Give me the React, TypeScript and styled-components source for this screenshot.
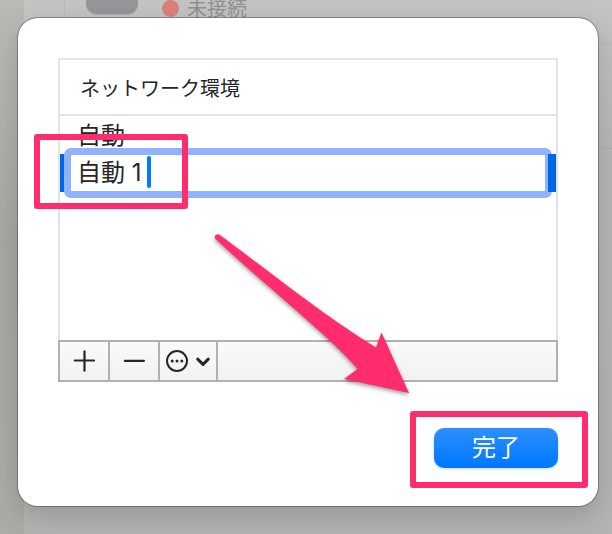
import React, { useState } from "react";
import styled, { createGlobalStyle } from "styled-components";

const PINK = "#ff2d6e";

const GlobalStyle = createGlobalStyle`
  * { box-sizing: border-box; }
  body {
    margin: 0;
    color: #262626;
    font-family: "Noto Sans CJK JP", "Noto Sans", sans-serif;
    background: #b1b0ac;
  }
  button, input { font: inherit; color: inherit; }
`;

const Page = styled.div`
  position: relative;
  min-height: 100vh;
  padding: 18px 14px 28px 18px;
`;

const Backdrop = styled.div`
  position: absolute;
  inset: 0;
  display: flex;
  overflow: hidden;
`;

const Desktop = styled.div`
  flex: 0 0 24px;
  background: linear-gradient(#bab9b5, #a9a7a3 45%, #adaba7);
`;

const Sidebar = styled.div`
  flex: 0 0 40px;
  background: linear-gradient(#c3c3c1, #b4b4b2);
`;

const Content = styled.div`
  flex: 1;
  background: linear-gradient(#c3c3c1, #b6b6b4 30%, #b4b4b2);
`;

const Service = styled.div`
  display: flex;
  align-items: flex-start;
  height: 44px;
  padding-left: 21px;
  border-left: 1px solid #b8b8b6;
  border-bottom: 1px solid #b8b8b6;
`;

const ServiceIcon = styled.span`
  width: 52px;
  height: 14px;
  margin-right: 24px;
  border-radius: 0 0 11px 11px;
  background: #949499;
  box-shadow: 0 1px 1px #a8a8a8;
`;

const StatusDot = styled.span`
  width: 17px;
  height: 17px;
  margin-right: 8px;
  border-radius: 50%;
  background: #d88078;
`;

const Status = styled.span`
  font-size: 20px;
  line-height: 16px;
  color: #90908f;
`;

const Separator = styled.div`
  height: 105px;
  border-bottom: 1px solid #adadab;
`;

const Dialog = styled.main`
  position: relative;
  padding: 40px 40px 38px;
  border-radius: 20px;
  background: #fff;
  box-shadow: 0 0 0 1px rgba(70, 70, 70, 0.5), 0 12px 28px rgba(0, 0, 0, 0.16);
`;

const Panel = styled.section`
  position: relative;
`;

const ListBox = styled.div`
  min-height: 282px;
  border: 2px solid #e3e3e3;
  border-bottom: 0;
`;

const ListHeader = styled.h1`
  margin: 0;
  padding: 2px 20px 0;
  border-bottom: 2px solid #e3e3e3;
  font-size: 20px;
  font-weight: 400;
  line-height: 52px;
`;

const List = styled.ul`
  margin: 0;
  padding: 0;
  list-style: none;
`;

const Row = styled.li<{ $selected?: boolean }>`
  position: relative;
  height: 38px;
  padding: ${(p) => (p.$selected ? "0 4px" : "0 17px")};
  background: ${(p) => (p.$selected ? "#0066e6" : "transparent")};
  font-size: 24px;
  line-height: 36px;
`;

const SelectionCap = styled.span`
  position: absolute;
  top: 0;
  right: 0;
  width: 8px;
  height: 100%;
  background: #0066e6;
`;

const Editor = styled.label`
  position: relative;
  top: -6px;
  display: block;
  border: 7px solid #8fb3ff;
  border-radius: 7px;
  background: #fff;
`;

const NameInput = styled.input`
  display: block;
  width: 100%;
  height: 36px;
  padding: 0 6px;
  border: 0;
  outline: 0;
  background: transparent;
  font-family: "Inter", "Noto Sans CJK JP", sans-serif;
  caret-color: transparent;
`;

const Caret = styled.span`
  position: absolute;
  top: 1px;
  left: 76px;
  width: 4px;
  height: 32px;
  border-radius: 2px;
  background: #007aff;
`;

const Highlight = styled.span<{ $area: "name" | "done" }>`
  position: absolute;
  border: 6px solid ${PINK};
  border-radius: 3px;
  pointer-events: none;
  ${(p) =>
    p.$area === "name"
      ? "top: -20px; left: -26px; width: 154px; height: 75px;"
      : "inset: -17px -30px -20px -24px;"}
`;

const Toolbar = styled.div`
  display: flex;
  height: 42px;
  border: 2px solid #b1b1b1;
  background: linear-gradient(#fafafa, #f2f2f2);
`;

const ToolButton = styled.button<{ $wide?: boolean }>`
  display: flex;
  align-items: center;
  justify-content: center;
  width: ${(p) => (p.$wide ? "58px" : "50px")};
  padding: 0;
  border: 0;
  border-right: 2px solid #b1b1b1;
  background: transparent;
`;

const Arrow = styled.svg`
  position: absolute;
  right: 144px;
  bottom: -18px;
  width: 204px;
  height: 170px;
  pointer-events: none;
  filter: drop-shadow(0 2px 2px rgba(0, 0, 0, 0.4));
`;

const Footer = styled.footer`
  display: flex;
  justify-content: flex-end;
  margin-top: 46px;
`;

const DoneArea = styled.div`
  position: relative;
`;

const DoneButton = styled.button`
  display: block;
  width: 124px;
  height: 40px;
  padding: 0 0 4px;
  border: 0;
  border-radius: 10px;
  background: linear-gradient(#2b8fff, #0077ff);
  box-shadow: 0 1px 3px rgba(0, 110, 255, 0.25);
  color: #fff;
  font-size: 24px;
  line-height: 36px;
`;

const PlusIcon = () => (
  <svg width="22" height="22" viewBox="0 0 22 22" fill="none" stroke="#262626" strokeWidth="2.2" strokeLinecap="round" aria-hidden="true">
    <path d="M11.5 1.3V20.7M1.8 10.5H21" />
  </svg>
);

const MinusIcon = () => (
  <svg width="22" height="22" viewBox="0 0 22 22" fill="none" stroke="#262626" strokeWidth="2.2" strokeLinecap="round" aria-hidden="true">
    <path d="M1.8 10.8H20.9" />
  </svg>
);

const MoreIcon = () => (
  <svg width="46" height="24" viewBox="0 0 46 24" fill="none" stroke="#262626" aria-hidden="true">
    <circle cx="12" cy="12" r="10" strokeWidth="2" />
    <g fill="#262626" stroke="none">
      <circle cx="7.2" cy="12" r="1.5" />
      <circle cx="12" cy="12" r="1.5" />
      <circle cx="16.8" cy="12" r="1.5" />
    </g>
    <path d="M32.7 10.2L38 15.3L43.3 10.2" strokeWidth="3" strokeLinecap="round" strokeLinejoin="round" />
  </svg>
);

export default function App() {
  const [name, setName] = useState("自動 1");

  return (
    <>
      <GlobalStyle />
      <Page>
        <Backdrop>
          <Desktop />
          <Sidebar />
          <Content>
            <Service>
              <ServiceIcon />
              <StatusDot />
              <Status>未接続</Status>
            </Service>
            <Separator />
          </Content>
        </Backdrop>
        <Dialog>
          <Panel>
            <ListBox>
              <ListHeader>ネットワーク環境</ListHeader>
              <List>
                <Row>自動</Row>
                <Row $selected>
                  <Editor>
                    <NameInput
                      aria-label="ネットワーク環境"
                      value={name}
                      onChange={(e) => setName(e.target.value)}
                    />
                    <Caret />
                  </Editor>
                  <SelectionCap />
                  <Highlight $area="name" />
                </Row>
              </List>
            </ListBox>
            <Toolbar>
              <ToolButton type="button" aria-label="追加"><PlusIcon /></ToolButton>
              <ToolButton type="button" aria-label="削除"><MinusIcon /></ToolButton>
              <ToolButton type="button" aria-label="その他" $wide><MoreIcon /></ToolButton>
            </Toolbar>
            <Arrow viewBox="210 230 204 170" aria-hidden="true">
              <path
                fill={PINK}
                d="M219.5 234.8C265 268 320 313 376 347.5L381.5 332.5L409 393L344 379L357.5 369C326 333 271 291 215.8 239.2C213.2 236.4 216.2 232.6 219.5 234.8Z"
              />
            </Arrow>
          </Panel>
          <Footer>
            <DoneArea>
              <DoneButton type="button">完了</DoneButton>
              <Highlight $area="done" />
            </DoneArea>
          </Footer>
        </Dialog>
      </Page>
    </>
  );
}
